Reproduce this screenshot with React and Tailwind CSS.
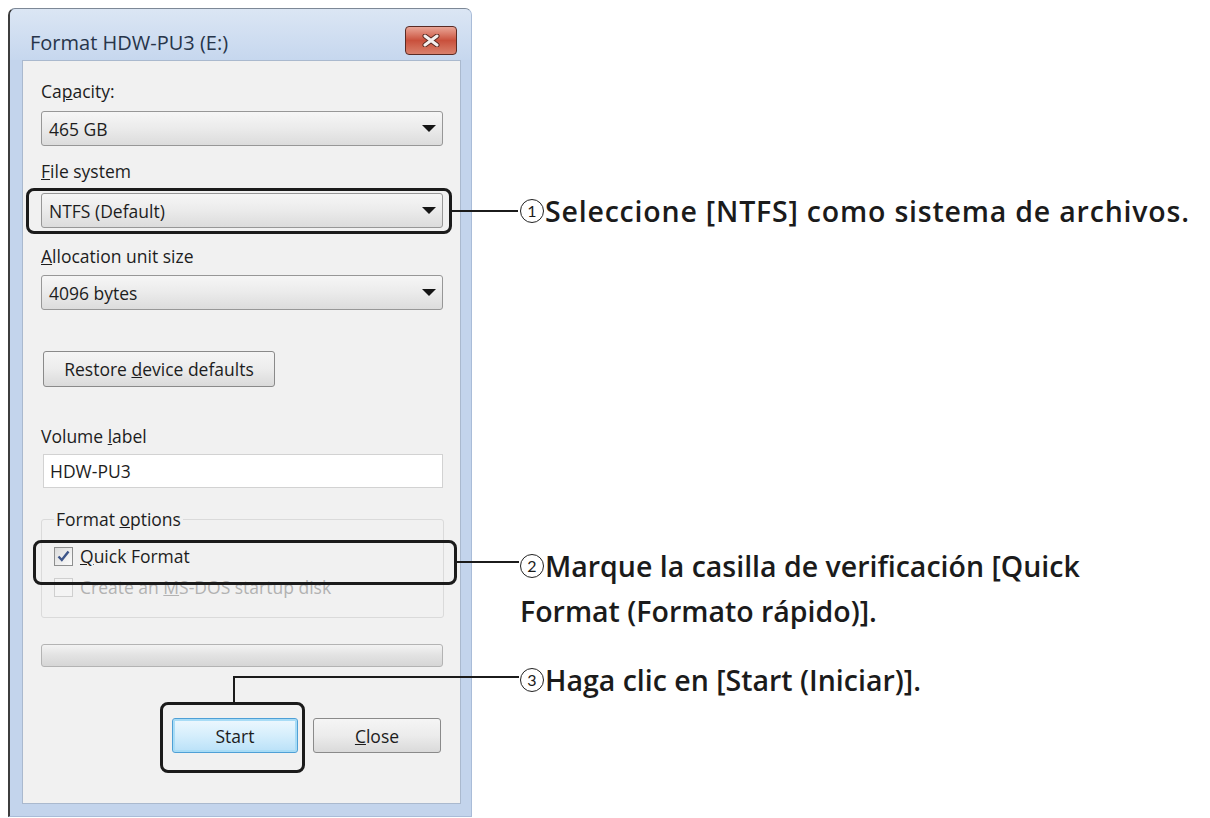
function Combo({ value }) {
  return (
    <div className="flex h-[35px] w-[402px] items-center justify-between rounded-[3px] border border-[#979797] bg-linear-to-b from-[#f6f6f6] via-[#ebebeb] to-[#dcdcdc] pl-[7px] pr-[6px]">
      <span>{value}</span>
      <svg width="14" height="7" viewBox="0 0 14 7">
        <path d="M0 0h14L7 7z" fill="#151515" />
      </svg>
    </div>
  )
}

function WinButton({ children, className = '' }) {
  return (
    <div className={`flex h-[35px] items-center justify-center rounded-[3px] border ${className}`}>
      <span>{children}</span>
    </div>
  )
}

function CheckBox({ checked, disabled }) {
  return (
    <span
      className={`flex h-[19px] w-[19px] items-center justify-center border ${
        disabled ? 'border-[#cfcfcf] bg-[#f4f4f4]' : 'border-[#8e8f8f] bg-linear-to-br from-[#dcdcdc] to-[#fbfbfb]'
      }`}
    >
      {checked && (
        <svg width="13" height="12" viewBox="0 0 13 12">
          <path d="M1.5 6.5 4.8 10 11.5 1.5" fill="none" stroke="#3d5589" strokeWidth="2.4" />
        </svg>
      )}
    </span>
  )
}

function Circled({ n }) {
  return (
    <span className="mr-[1px] inline-flex h-[24px] w-[24px] translate-y-[-3px] items-center justify-center rounded-full border-[1.5px] border-[#222] align-middle font-['Lato',sans-serif] text-[16px] font-normal leading-none tracking-normal">
      {n}
    </span>
  )
}

function FormatDialog() {
  return (
    <div className="ml-[8px] mt-[8px] flex h-[809px] w-[464px] flex-col rounded-t-[7px] border border-l-2 border-[#a9bcd8] border-l-[#3d3d3d] border-t-[#7d8896] bg-[#c3d4ec] pb-[12px] pl-[12px] pr-[10px] font-['Open_Sans','Noto_Sans',sans-serif] text-[17.5px] text-[#1d1d1d]">
      {/* title bar */}
      <div className="-ml-[12px] -mr-[10px] flex h-[51px] items-start justify-between rounded-t-[6px] bg-linear-to-b from-[#dbe6f4] to-[#c6d7ee] pl-[20px] pr-[14px]">
        <span className="mt-[22px] text-[20px] leading-[24px] text-[#27354a]">Format HDW-PU3 (E:)</span>
        <div className="mt-[17px] flex h-[29px] w-[52px] items-center justify-center rounded-[4px] border border-[#5a2b24] bg-linear-to-b from-[#e9a597] via-[#c9503c] to-[#d9806c]">
          <svg width="18" height="13" viewBox="0 0 18 13">
            <path d="M3 2 15 11M15 2 3 11" stroke="#5a2a22" strokeWidth="5" strokeLinecap="round" />
            <path d="M3 2 15 11M15 2 3 11" stroke="#f4f0ef" strokeWidth="3" strokeLinecap="round" />
          </svg>
        </div>
      </div>

      {/* client area */}
      <div className="flex flex-1 flex-col border border-[#aab9ce] bg-[#f1f1f1] pl-[18px] leading-[20px]">
        <div className="mt-[20px]">
          Ca<u>p</u>acity:
        </div>
        <div className="mt-[10px]">
          <Combo value="465 GB" />
        </div>
        <div className="mt-[15px]">
          <u>F</u>ile system
        </div>
        <div className="mt-[12px]">
          <Combo value="NTFS (Default)" />
        </div>
        <div className="mt-[18px]">
          <u>A</u>llocation unit size
        </div>
        <div className="mt-[9px]">
          <Combo value="4096 bytes" />
        </div>
        <WinButton className="ml-[2px] mt-[41px] h-[36px] w-[232px] border-[#8a8a8a] bg-linear-to-b from-[#f5f5f5] via-[#ececec] to-[#dadada]">
          Restore <u>d</u>evice defaults
        </WinButton>
        <div className="mt-[39px]">
          Volume <u>l</u>abel
        </div>
        <div className="ml-[2px] mt-[8px] flex h-[34px] w-[400px] items-center border border-[#d2d2d2] bg-white pl-[6px]">
          HDW-PU3
        </div>

        <fieldset className="mt-[21px] h-[109px] w-[403px] rounded-[3px] border border-[#dadada] pl-[12px]">
          <legend className="px-[2px]">
            Format <u>o</u>ptions
          </legend>
          <div className="mt-[17px] flex items-center gap-[7px]">
            <CheckBox checked />
            <span>
              <u>Q</u>uick Format
            </span>
          </div>
          <div className="mt-[11px] flex items-center gap-[7px] text-[#b2b2b2]">
            <CheckBox disabled />
            <span>
              Create an <u>M</u>S-DOS startup disk
            </span>
          </div>
        </fieldset>

        <div className="mt-[26px] h-[23px] w-[402px] rounded-[3px] border border-[#b3b3b3] bg-linear-to-b from-[#f3f3f3] via-[#e2e2e2] to-[#d6d6d6]" />

        <div className="mt-[51px] flex justify-end gap-[15px] pr-[19px]">
          <WinButton className="w-[126px] border-[#4fa0d6] bg-linear-to-b from-[#eef8fe] via-[#d5eefc] to-[#b9e1f8] shadow-[inset_0_0_0_2px_#a8dcf6]">
            Start
          </WinButton>
          <WinButton className="w-[128px] border-[#8a8a8a] bg-linear-to-b from-[#f5f5f5] via-[#ececec] to-[#dadada]">
            <u>C</u>lose
          </WinButton>
        </div>
      </div>
    </div>
  )
}

export default function App() {
  return (
    <div className="relative flex h-[818px] w-[1210px] overflow-hidden bg-white">
      <FormatDialog />

      {/* callout captions */}
      <div className="ml-[48px] flex flex-col font-['Open_Sans',sans-serif] text-[28.5px] font-semibold text-[#1b1b1b]">
        <p className="mt-[194px] whitespace-nowrap leading-[34px] tracking-[0.8px]">
          <Circled n="1" />
          Seleccione [NTFS] como sistema de archivos.
        </p>
        <p className="mt-[316px] whitespace-nowrap leading-[45px]">
          <Circled n="2" />
          Marque la casilla de verificación [Quick
          <br />
          Format (Formato rápido)].
        </p>
        <p className="mt-[29px] whitespace-nowrap leading-[34px]">
          <Circled n="3" />
          Haga clic en [Start (Iniciar)].
        </p>
      </div>

      {/* highlight boxes and leader lines */}
      <div className="absolute left-[26px] top-[188px] h-[46px] w-[426px] rounded-[8px] border-[3px] border-[#1b1b1b]" />
      <div className="absolute left-[452px] top-[210px] h-[2px] w-[66px] bg-[#1b1b1b]" />

      <div className="absolute left-[33px] top-[540px] h-[45px] w-[424px] rounded-[8px] border-[3px] border-[#1b1b1b]" />
      <div className="absolute left-[457px] top-[561px] h-[2px] w-[62px] bg-[#1b1b1b]" />

      <div className="absolute left-[160px] top-[702px] h-[71px] w-[145px] rounded-[8px] border-[3px] border-[#1b1b1b]" />
      <div className="absolute left-[233px] top-[676px] h-[27px] w-[2px] bg-[#1b1b1b]" />
      <div className="absolute left-[233px] top-[676px] h-[2px] w-[286px] bg-[#1b1b1b]" />
    </div>
  )
}
